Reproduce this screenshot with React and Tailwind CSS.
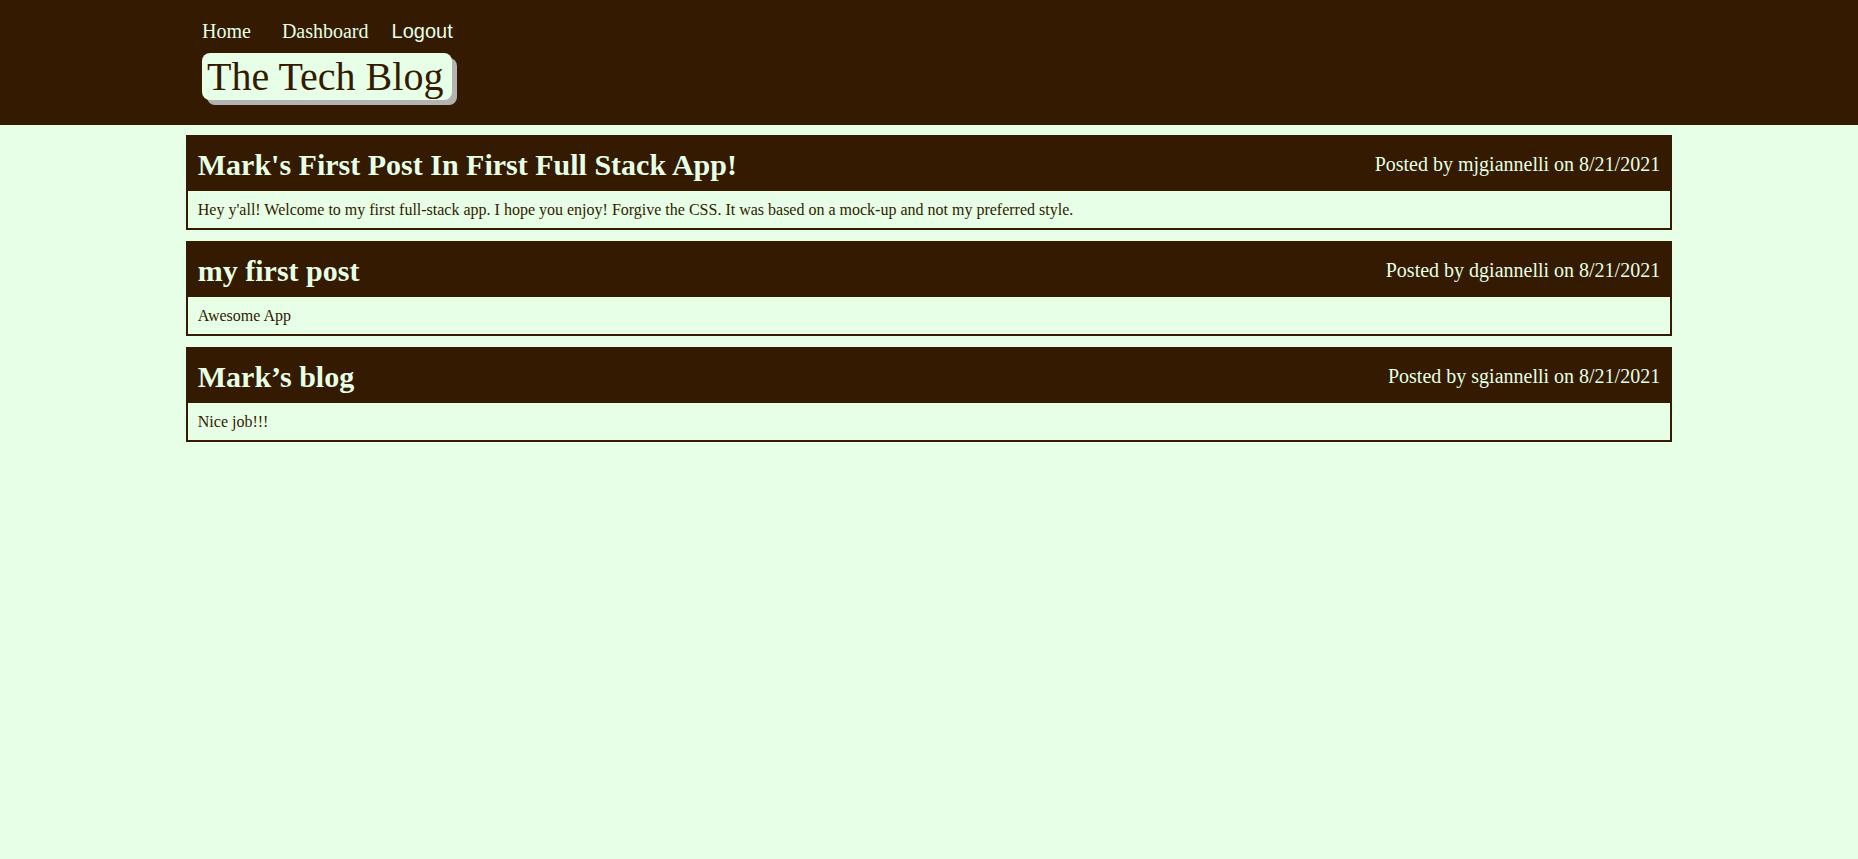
const posts = [
  {
    title: "Mark's First Post In First Full Stack App!",
    author: "mjgiannelli",
    date: "8/21/2021",
    body: "Hey y'all! Welcome to my first full-stack app. I hope you enjoy! Forgive the CSS. It was based on a mock-up and not my preferred style.",
  },
  { title: "my first post", author: "dgiannelli", date: "8/21/2021", body: "Awesome App" },
  { title: "Mark\u2019s blog", author: "sgiannelli", date: "8/21/2021", body: "Nice job!!!" },
];

function PostCard({ post }) {
  return (
    <div className="border-2 border-[#331a00] mb-[11px]">
      <div className="bg-[#331a00] h-[54px] flex justify-between items-center px-[10px] text-[#e6ffe6]">
        <h2 className="text-[30px] font-bold">{post.title}</h2>
        <p className="text-[20px]">
          Posted by {post.author} on {post.date}
        </p>
      </div>
      <div className="h-[37px] flex items-center px-[10px] text-[16px] text-[#331a00]">
        {post.body}
      </div>
    </div>
  );
}

export default function App() {
  return (
    <div className="min-h-screen bg-[#e6ffe6] font-['Liberation_Serif',serif]">
      <header className="bg-[#331a00] h-[125px] pl-[202px] pt-[16px]">
        <nav className="flex items-baseline text-[20px] text-[#e6ffe6]">
          <a href="#" className="mr-[31px]">Home</a>
          <a href="#" className="mr-[23px]">Dashboard</a>
          <button className="font-['Liberation_Sans',Arial,sans-serif] text-[20px]">Logout</button>
        </nav>
        <div className="mt-[7px] w-[250px] h-[47px] pl-[5px] pt-[2px] rounded-lg bg-[#e6ffe6] shadow-[5px_5px_0_#b3b3b3] text-[40px] leading-[1.107] text-[#331a00]">
          The Tech Blog
        </div>
      </header>
      <main className="w-[80%] mx-auto pt-[10px]">
        {posts.map((post) => (
          <PostCard key={post.author} post={post} />
        ))}
      </main>
    </div>
  );
}
